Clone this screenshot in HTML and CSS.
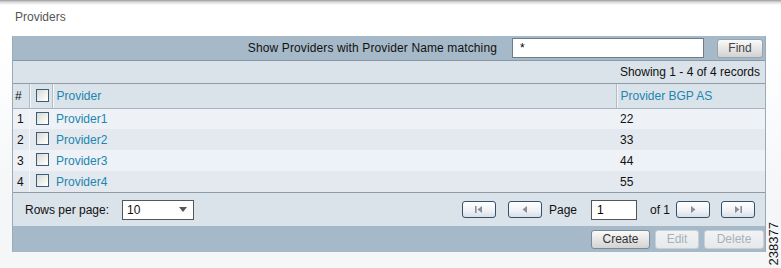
FILE: index.html
```html
<!DOCTYPE html>
<html>
<head>
<meta charset="utf-8">
<link rel="stylesheet" href="styles.css">
</head>
<body>
<div class="page">
  <div class="topshadow"></div>
  <div class="title">Providers</div>
  <div class="panel">
    <div class="searchbar">
      <span class="search-label">Show Providers with Provider Name matching</span>
      <div class="search-input">*</div>
      <button class="btn find">Find</button>
    </div>
    <div class="showing">Showing 1 - 4 of 4 records</div>
    <table class="grid">
      <colgroup>
        <col class="c-num"><col class="c-chk"><col class="c-name"><col class="c-as">
      </colgroup>
      <thead>
        <tr>
          <th class="num">#</th>
          <th class="chk"><span class="cb"></span></th>
          <th class="link">Provider</th>
          <th class="link">Provider BGP AS</th>
        </tr>
      </thead>
      <tbody>
        <tr class="odd"><td class="num">1</td><td class="chk"><span class="cb"></span></td><td class="link">Provider1</td><td>22</td></tr>
        <tr class="even"><td class="num">2</td><td class="chk"><span class="cb"></span></td><td class="link">Provider2</td><td>33</td></tr>
        <tr class="odd"><td class="num">3</td><td class="chk"><span class="cb"></span></td><td class="link">Provider3</td><td>44</td></tr>
        <tr class="even"><td class="num">4</td><td class="chk"><span class="cb"></span></td><td class="link">Provider4</td><td>55</td></tr>
      </tbody>
    </table>
    <div class="pager">
      <div class="rows">
        <span>Rows per page:</span>
        <div class="select"><span>10</span><span class="caret"></span></div>
      </div>
      <div class="nav">
        <button class="pbtn first"><svg width="10" height="9" viewBox="0 0 10 9"><rect x="1" y="1" width="1.6" height="7" fill="#8a9099"/><path d="M8 1 L3.5 4.5 L8 8 Z" fill="#8a9099"/></svg></button>
        <button class="pbtn prev"><svg width="10" height="9" viewBox="0 0 10 9"><path d="M7 1 L2.5 4.5 L7 8 Z" fill="#8a9099"/></svg></button>
        <span class="pg">Page</span>
        <div class="page-input">1</div>
        <span class="of">of 1</span>
        <button class="pbtn next"><svg width="10" height="9" viewBox="0 0 10 9"><path d="M3 1 L7.5 4.5 L3 8 Z" fill="#8a9099"/></svg></button>
        <button class="pbtn last"><svg width="10" height="9" viewBox="0 0 10 9"><path d="M2 1 L6.5 4.5 L2 8 Z" fill="#8a9099"/><rect x="7.4" y="1" width="1.6" height="7" fill="#8a9099"/></svg></button>
      </div>
    </div>
    <div class="actions">
      <button class="btn create">Create</button>
      <button class="btn dis edit">Edit</button>
      <button class="btn dis del">Delete</button>
    </div>
  </div>
  <div class="figid">238377</div>
</div>
</body>
</html>
```
FILE: styles.css
```css
* { box-sizing: border-box; }
html, body { margin: 0; padding: 0; }
body {
  width: 781px;
  height: 268px;
  overflow: hidden;
  font-family: "Liberation Sans", Arial, sans-serif;
  font-size: 12px;
  color: #000;
  background: linear-gradient(#ffffff 0, #ffffff 40px, #f4f6f8 200px);
}
.page { position: relative; width: 781px; height: 268px; }
.topshadow {
  height: 5px;
  background: linear-gradient(#9a9a9a, #d8d8d8 40%, #ffffff);
}
.title {
  height: 31px;
  padding: 5px 0 0 15px;
  color: #555;
  font-size: 12px;
}
.panel {
  margin-left: 12px;
  width: 754px;
  border-left: 1px solid #9aaab8;
  border-right: 1px solid #9aaab8;
  display: flex;
  flex-direction: column;
}
.searchbar {
  height: 25px;
  background: #a5b9c9;
  border-bottom: 1px solid #8797a5;
  display: flex;
  align-items: center;
  justify-content: flex-end;
  padding-right: 2px;
}
.search-label { margin-right: 15px; color: #111; letter-spacing: 0.12px; }
.search-input {
  width: 192px;
  height: 20px;
  background: #fff;
  border: 1px solid #6c7c8a;
  padding: 2px 0 0 7px;
  font-size: 12px;
  margin-right: 13px;
}
.btn {
  font-family: "Liberation Sans", Arial, sans-serif;
  font-size: 12px;
  height: 19px;
  padding: 0 7px;
  border: 1px solid #9aa2aa;
  border-radius: 3px;
  background: linear-gradient(#fafafa, #e4e4e4 55%, #d2d2d2);
  color: #333;
  line-height: 17px;
}
.find { width: 46px; color: #444; }
.showing {
  height: 23px;
  background: #dae2ea;
  border-bottom: 1px solid #8f9ca8;
  text-align: right;
  padding: 4px 5px 0 0;
  color: #111;
}
.grid {
  width: 752px;
  border-collapse: collapse;
  table-layout: fixed;
}
.c-num { width: 16px; }
.c-chk { width: 23px; }
.c-name { width: 564px; }
.c-as { width: 149px; }
.grid th {
  height: 24px;
  background: #dae2ea;
  font-weight: normal;
  text-align: left;
  padding: 0 0 0 4px;
  border-bottom: 1px solid #a9b6c1;
  border-left: 1px solid #b0bcc6;
  box-shadow: inset 1px 0 0 #f4f7fa;
  color: #111;
}
.grid th.num { border-left: none; box-shadow: none; padding-left: 2px; }
.grid td {
  height: 21px;
  padding: 0 0 0 4px;
  color: #111;
}
.grid td.num { padding-left: 4px; border-right: 1px solid #f4f7fa; }
.grid td.chk { padding-left: 6px; }
.grid th.chk { padding-left: 6px; }
.grid tr.odd td { background: #eef2f7; }
.grid tr.even td { background: #e3e9ef; }
.grid .link { color: #2186ae; }
.cb {
  display: inline-block;
  width: 13px;
  height: 13px;
  border: 1px solid #3a5d7c;
  background: linear-gradient(135deg, #d9d9d2, #f6f6f3 70%, #ffffff);
  vertical-align: middle;
  margin-top: -3px;
}
.pager {
  height: 34px;
  background: #dae2ea;
  border-top: 1px solid #8f9ca8;
  display: flex;
  align-items: center;
  justify-content: space-between;
  padding: 0 10px 0 12px;
}
.rows { display: flex; align-items: center; color: #111; }
.select {
  margin-left: 13px;
  width: 72px;
  height: 20px;
  background: #fff;
  border: 1px solid #555;
  display: flex;
  align-items: center;
  justify-content: space-between;
  padding: 0 6px 0 4px;
}
.caret {
  width: 0; height: 0;
  border-left: 4px solid transparent;
  border-right: 4px solid transparent;
  border-top: 5px solid #555;
}
.nav { display: flex; align-items: center; }
.pbtn {
  width: 34px;
  height: 17px;
  border: 1px solid #34506c;
  border-radius: 3px;
  background: linear-gradient(#ffffff, #eef1f4 60%, #d9dfe5);
  padding: 0;
  display: flex;
  align-items: center;
  justify-content: center;
  flex: none;
}
.first { margin-right: 12px; }
.pg { margin: 0 14px 0 7px; color: #111; width: 28px; }
.page-input {
  width: 46px;
  height: 20px;
  background: #fff;
  border: 1px solid #555;
  padding: 2px 0 0 5px;
  margin-right: 13px;
}
.of { margin-right: 6px; color: #111; width: 20px; }
.next { margin-right: 11px; }
.actions {
  height: 26px;
  background: #a5b9c9;
  display: flex;
  align-items: center;
  justify-content: flex-end;
  gap: 5px;
  padding-right: 1px;
}
.create { width: 59px; border-color: #7f8891; color: #333; }
.dis {
  background: linear-gradient(#f1f3f5, #e6e9ec);
  border-color: #c8d0d6;
  color: #a9b1b8;
}
.edit { width: 44px; }
.del { width: 60px; }
.figid {
  position: absolute;
  right: 1px;
  top: 222px;
  writing-mode: vertical-rl;
  transform: rotate(180deg);
  font-size: 13px;
  color: #111;
  line-height: 13px;
}
```
